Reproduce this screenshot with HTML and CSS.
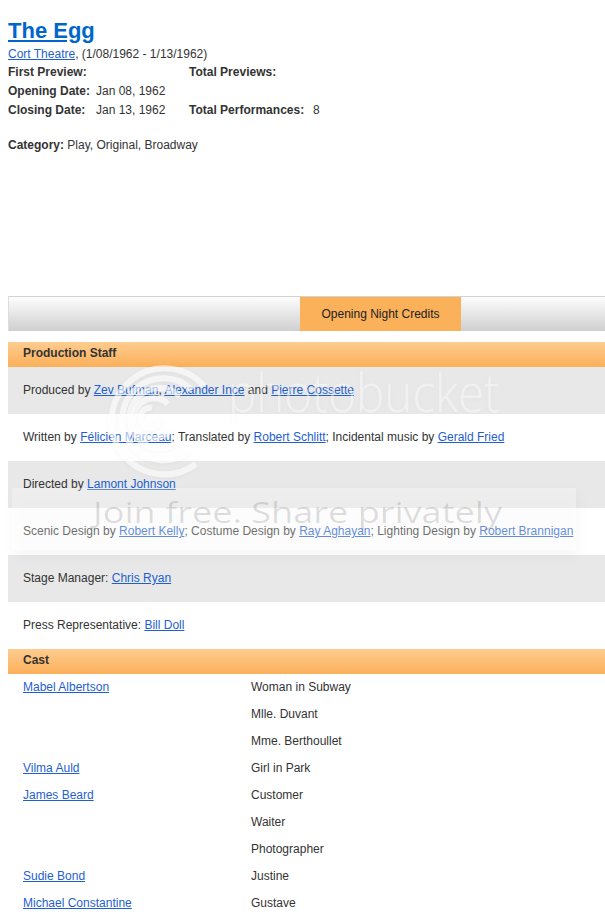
FILE: index.html
```html
<!DOCTYPE html>
<html lang="en">
<head>
    <meta charset="UTF-8">
    <meta name="viewport" content="width=device-width, initial-scale=1.0">
    <title>The Egg - Cort Theatre</title>
    <link rel="stylesheet" href="styles.css">
</head>
<body>
    <h1 class="show-title"><a href="#">The Egg</a></h1>
    <div class="venue"><a href="#">Cort Theatre</a>, (1/08/1962 - 1/13/1962)</div>

    <div class="dates">
        <span class="label">First Preview:</span><span></span>
        <span class="label">Total Previews:</span><span></span>
        <span class="label">Opening Date:</span><span>Jan 08, 1962</span>
        <span></span><span></span>
        <span class="label">Closing Date:</span><span>Jan 13, 1962</span>
        <span class="label">Total Performances:</span><span>8</span>
    </div>

    <div class="category"><b>Category:</b> Play, Original, Broadway</div>

    <div class="tabs">
        <div class="tab active">Opening Night Credits</div>
    </div>

    <div class="section-head">Production Staff</div>
    <div class="staff">
        <div class="staff-row">Produced by <a href="#">Zev Bufman</a>, <a href="#">Alexander Ince</a> and <a href="#">Pierre Cossette</a></div>
        <div class="staff-row">Written by <a href="#">Félicien Marceau</a>; Translated by <a href="#">Robert Schlitt</a>; Incidental music by <a href="#">Gerald Fried</a></div>
        <div class="staff-row">Directed by <a href="#">Lamont Johnson</a></div>
        <div class="staff-row">Scenic Design by <a href="#">Robert Kelly</a>; Costume Design by <a href="#">Ray Aghayan</a>; Lighting Design by <a href="#">Robert Brannigan</a></div>
        <div class="staff-row">Stage Manager: <a href="#">Chris Ryan</a></div>
        <div class="staff-row">Press Representative: <a href="#">Bill Doll</a></div>
    </div>

    <div class="section-head">Cast</div>
    <div class="cast">
        <a href="#">Mabel Albertson</a><span>Woman in Subway</span>
        <span></span><span>Mlle. Duvant</span>
        <span></span><span>Mme. Berthoullet</span>
        <a href="#">Vilma Auld</a><span>Girl in Park</span>
        <a href="#">James Beard</a><span>Customer</span>
        <span></span><span>Waiter</span>
        <span></span><span>Photographer</span>
        <a href="#">Sudie Bond</a><span>Justine</span>
        <a href="#">Michael Constantine</a><span>Gustave</span>
    </div>

    <!-- hosting watermark laid over the credits -->
    <svg class="watermark" width="605" height="918" viewBox="0 0 605 918">
        <defs>
            <filter id="soft" x="-10%" y="-30%" width="120%" height="180%">
                <feDropShadow dx="2" dy="6" stdDeviation="6" flood-color="#000" flood-opacity="0.12"/>
            </filter>
            <filter id="glow" x="-10%" y="-10%" width="120%" height="120%">
                <feDropShadow dx="0" dy="1" stdDeviation="2" flood-color="#000" flood-opacity="0.06"/>
            </filter>
        </defs>
        <g fill="none" stroke="#fff" stroke-opacity="0.6" stroke-width="6" filter="url(#glow)">
            <path d="M 160 418 A 10 10 0 1 1 152 408"/>
            <path d="M 170 430 A 20 20 0 1 1 168 404"/>
            <path d="M 180 440 A 30 30 0 1 1 180 396"/>
            <path d="M 188 452 A 41 41 0 1 1 192 390"/>
            <path d="M 196 464 A 53 53 0 1 1 204 386"/>
        </g>
        <text class="wm-logo" x="228" y="412" textLength="272" lengthAdjust="spacingAndGlyphs" filter="url(#glow)">photobucket</text>
        <rect x="12" y="488" width="564" height="62" fill="#fff" fill-opacity="0.28" filter="url(#soft)"/>
        <text class="wm-tagline" x="93" y="523" textLength="409" lengthAdjust="spacingAndGlyphs">Join free. Share privately</text>
    </svg>
</body>
</html>
```

FILE: styles.css
```css
body {
    margin: 8px 0 0 8px;
    font-family: "Liberation Sans", Arial, sans-serif;
    font-size: 12px;
    line-height: 14px;
    color: #333;
    background: #fff;
    overflow-x: hidden;
}
a {
    color: #1f5fcf;
    text-decoration: underline;
}
.show-title {
    margin: 10px 0 4px;
    font-size: 22px;
    line-height: 25px;
    font-weight: bold;
}
.show-title a {
    color: #0066cc;
}
.venue {
    color: #333;
}
.dates {
    display: grid;
    grid-template-columns: 88px 93px 124px auto;
    line-height: 19px;
    margin-top: 2px;
}
.dates .label {
    font-weight: bold;
}
.category {
    margin-top: 18px;
}
.tabs {
    margin-top: 144px;
    height: 35px;
    box-sizing: border-box;
    border-top: 1px solid #d2d2d2;
    border-left: 1px solid #dcdcdc;
    background: linear-gradient(#fdfdfd, #cfcfcf);
    display: flex;
}
.tab {
    margin-left: 291px;
    width: 161px;
    line-height: 34px;
    text-align: center;
    color: #222;
}
.tab.active {
    background: #fbb05a;
}
.section-head {
    margin-top: 11px;
    height: 25px;
    box-sizing: border-box;
    padding: 0 15px;
    line-height: 23px;
    font-weight: bold;
    color: #333;
    background: linear-gradient(#fecc8f, #fbb05a);
}
.staff + .section-head {
    margin-top: 0;
}
.staff-row {
    padding: 16px 15px 17px;
}
.staff-row:nth-child(odd) {
    background: #e8e8e8;
}
.cast {
    display: grid;
    grid-template-columns: 228px auto;
    padding: 0 15px;
}
.cast > * {
    padding: 6px 0 7px;
    justify-self: start;
}
.watermark {
    position: absolute;
    left: 0;
    top: 0;
    pointer-events: none;
}
.wm-logo {
    font-family: "Open Sans", "Liberation Sans", sans-serif;
    font-weight: 300;
    font-size: 54px;
    fill: #fff;
    fill-opacity: 0.42;
}
.wm-tagline {
    font-family: "Open Sans", "Liberation Sans", sans-serif;
    font-weight: 400;
    font-size: 30px;
    fill: #000;
    fill-opacity: 0.12;
}
```
